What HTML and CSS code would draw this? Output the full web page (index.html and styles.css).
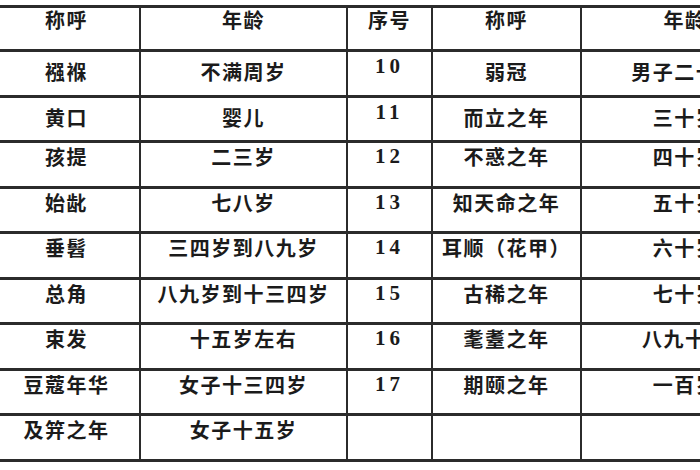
FILE: index.html
```html
<!DOCTYPE html>
<html lang="zh">
<head>
<meta charset="utf-8">
<title>古代年龄称呼</title>
<link rel="stylesheet" href="styles.css">
</head>
<body>
<div class="page">
<table class="ages">
  <colgroup>
    <col class="c-name">
    <col class="c-age">
    <col class="c-num">
    <col class="c-name2">
    <col class="c-age2">
  </colgroup>
  <thead>
    <tr class="head">
      <th>称呼</th><th>年龄</th><th>序号</th><th>称呼</th><th>年龄</th>
    </tr>
  </thead>
  <tbody>
    <tr class="low"><td>襁褓</td><td>不满周岁</td><td class="num">10</td><td>弱冠</td><td>男子二十岁</td></tr>
    <tr class="low"><td>黄口</td><td>婴儿</td><td class="num">11</td><td>而立之年</td><td>三十岁</td></tr>
    <tr><td>孩提</td><td>二三岁</td><td class="num">12</td><td>不惑之年</td><td>四十岁</td></tr>
    <tr><td>始龀</td><td>七八岁</td><td class="num">13</td><td>知天命之年</td><td>五十岁</td></tr>
    <tr><td>垂髫</td><td>三四岁到八九岁</td><td class="num">14</td><td>耳顺（花甲）</td><td>六十岁</td></tr>
    <tr><td>总角</td><td>八九岁到十三四岁</td><td class="num">15</td><td>古稀之年</td><td>七十岁</td></tr>
    <tr><td>束发</td><td>十五岁左右</td><td class="num">16</td><td>耄耋之年</td><td>八九十岁</td></tr>
    <tr><td>豆蔻年华</td><td>女子十三四岁</td><td class="num">17</td><td>期颐之年</td><td>一百岁</td></tr>
    <tr><td>及笄之年</td><td>女子十五岁</td><td class="num"></td><td></td><td></td></tr>
  </tbody>
</table>
</div>
</body>
</html>
```

FILE: styles.css
```css
html, body {
  margin: 0;
  padding: 0;
  background: #ffffff;
}

body {
  width: 700px;
  height: 470px;
  overflow: hidden;
  font-family: "Noto Sans CJK SC", "Liberation Serif", sans-serif;
  color: #1b1b1b;
}

.page {
  padding-top: 5px;
  margin-left: -8px;
}

.ages {
  table-layout: fixed;
  width: 798px;
  border-collapse: separate;
  border-spacing: 2px 3px;
  background: #2b2b2b;
}

.c-name { width: 145px; }
.c-age { width: 205px; }
.c-num { width: 83px; }
.c-name2 { width: 147px; }
.c-age2 { width: 206px; }

.ages th,
.ages td {
  background: #ffffff;
  padding: 0;
  text-align: center;
  vertical-align: top;
  font-size: 20px;
  font-weight: 700;
  line-height: 24px;
  letter-spacing: 1.5px;
  white-space: nowrap;
}

.ages th {
  height: 41px;
  padding-top: 0;
  box-sizing: border-box;
}

.ages td {
  height: 42.5px;
  padding-top: 2px;
  box-sizing: border-box;
}

.ages tr.low td {
  padding-top: 8px;
}

.ages td.num {
  font-family: "Liberation Serif", serif;
  font-size: 21px;
  letter-spacing: 4px;
  padding-top: 1px;
}

.ages tr.low td.num {
  padding-top: 2px;
}
```
